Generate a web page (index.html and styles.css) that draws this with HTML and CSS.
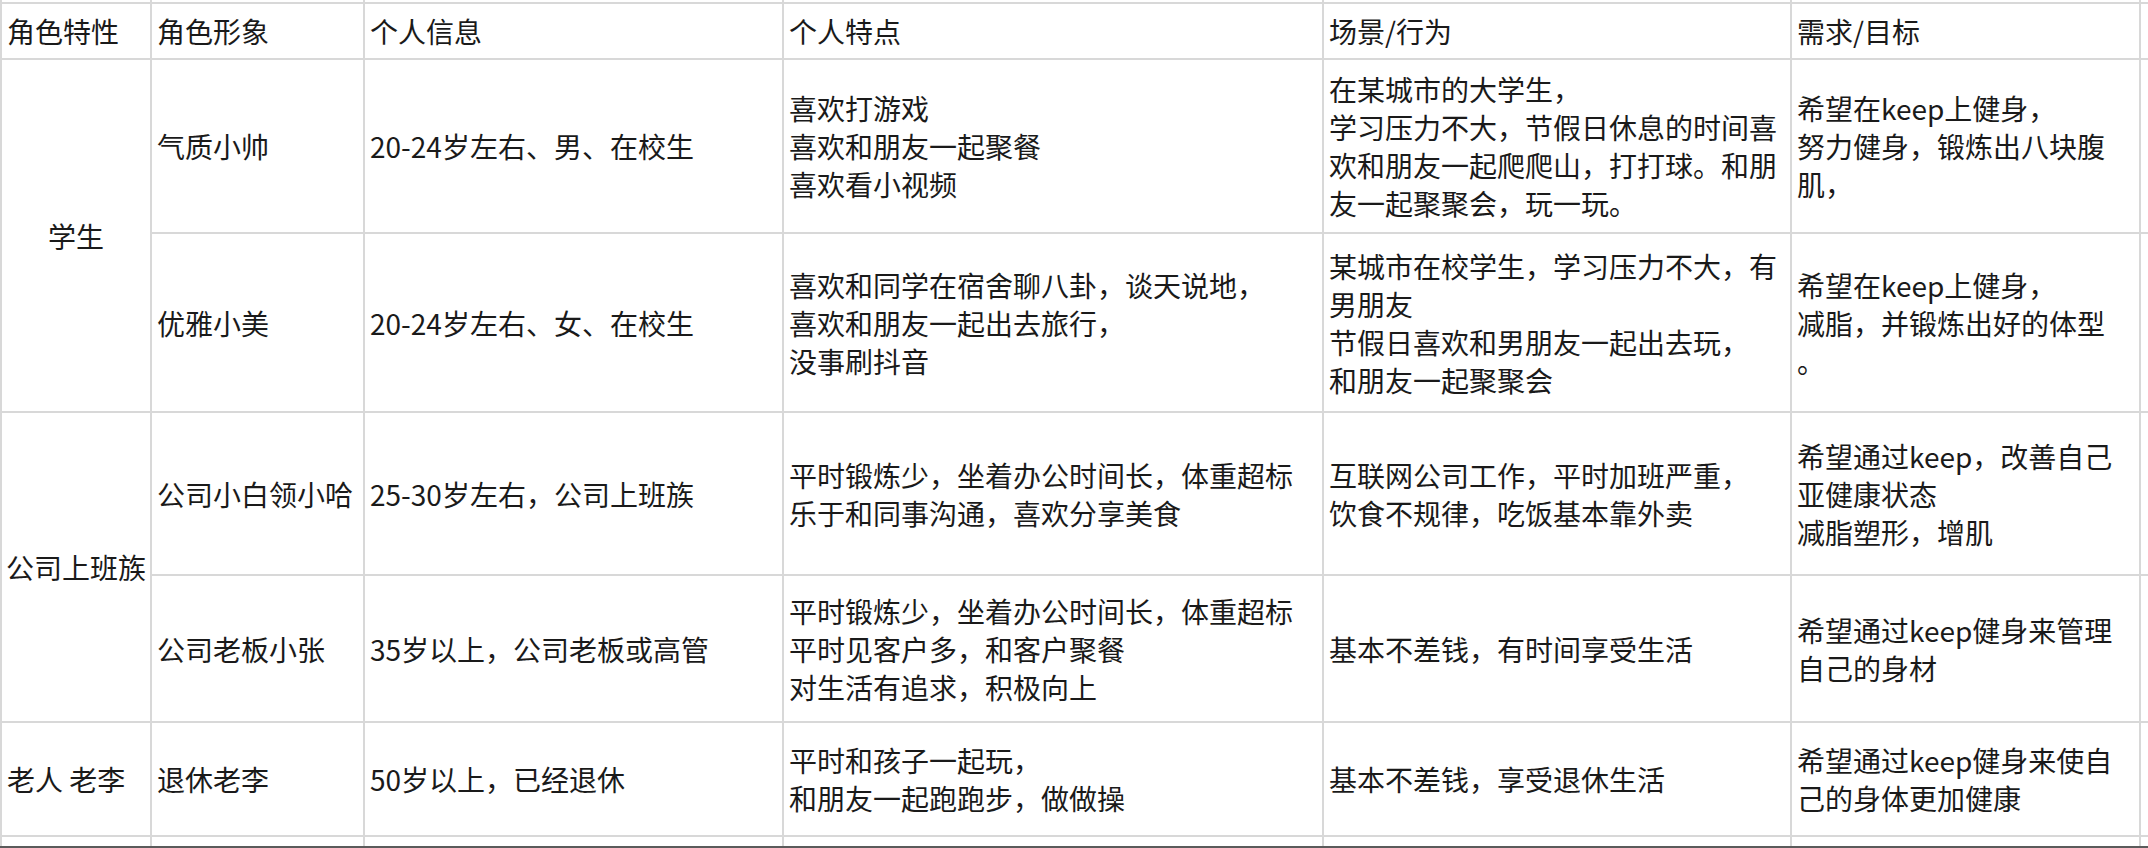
FILE: index.html
```html
<!DOCTYPE html>
<html lang="zh-CN">
<head>
<meta charset="utf-8">
<title>用户角色</title>
<link rel="stylesheet" href="styles.css">
</head>
<body>
<div class="sheet">
  <div class="grid">
    <div class="cell strip"></div><div class="cell strip"></div><div class="cell strip"></div><div class="cell strip"></div><div class="cell strip"></div><div class="cell strip"></div><div class="cell strip"></div>

    <div class="cell">角色特性</div>
    <div class="cell">角色形象</div>
    <div class="cell">个人信息</div>
    <div class="cell">个人特点</div>
    <div class="cell">场景/行为</div>
    <div class="cell">需求/目标</div>
    <div class="cell"></div>

    <div class="cell span2 center">学生</div>
    <div class="cell">气质小帅</div>
    <div class="cell">20-24岁左右、男、在校生</div>
    <div class="cell">喜欢打游戏<br>喜欢和朋友一起聚餐<br>喜欢看小视频</div>
    <div class="cell">在某城市的大学生，<br>学习压力不大，节假日休息的时间喜<br>欢和朋友一起爬爬山，打打球。和朋<br>友一起聚聚会，玩一玩。</div>
    <div class="cell">希望在keep上健身，<br>努力健身，锻炼出八块腹<br>肌，</div>
    <div class="cell"></div>

    <div class="cell">优雅小美</div>
    <div class="cell">20-24岁左右、女、在校生</div>
    <div class="cell">喜欢和同学在宿舍聊八卦，谈天说地，<br>喜欢和朋友一起出去旅行，<br>没事刷抖音</div>
    <div class="cell">某城市在校学生，学习压力不大，有<br>男朋友<br>节假日喜欢和男朋友一起出去玩，<br>和朋友一起聚聚会</div>
    <div class="cell">希望在keep上健身，<br>减脂，并锻炼出好的体型<br>。</div>
    <div class="cell"></div>

    <div class="cell span2 center">公司上班族</div>
    <div class="cell">公司小白领小哈</div>
    <div class="cell">25-30岁左右，公司上班族</div>
    <div class="cell">平时锻炼少，坐着办公时间长，体重超标<br>乐于和同事沟通，喜欢分享美食</div>
    <div class="cell">互联网公司工作，平时加班严重，<br>饮食不规律，吃饭基本靠外卖</div>
    <div class="cell">希望通过keep，改善自己<br>亚健康状态<br>减脂塑形，增肌</div>
    <div class="cell"></div>

    <div class="cell">公司老板小张</div>
    <div class="cell">35岁以上，公司老板或高管</div>
    <div class="cell">平时锻炼少，坐着办公时间长，体重超标<br>平时见客户多，和客户聚餐<br>对生活有追求，积极向上</div>
    <div class="cell">基本不差钱，有时间享受生活</div>
    <div class="cell">希望通过keep健身来管理<br>自己的身材</div>
    <div class="cell"></div>

    <div class="cell">老人 老李</div>
    <div class="cell">退休老李</div>
    <div class="cell">50岁以上，已经退休</div>
    <div class="cell">平时和孩子一起玩，<br>和朋友一起跑跑步，做做操</div>
    <div class="cell">基本不差钱，享受退休生活</div>
    <div class="cell">希望通过keep健身来使自<br>己的身体更加健康</div>
    <div class="cell"></div>

    <div class="cell"></div><div class="cell"></div><div class="cell"></div><div class="cell"></div><div class="cell"></div><div class="cell"></div><div class="cell"></div>
  </div>
</div>
</body>
</html>
```
FILE: styles.css
```css
html, body {
  margin: 0;
  padding: 0;
  background: #ffffff;
}

.sheet {
  width: 2148px;
  height: 848px;
  overflow: hidden;
  box-sizing: border-box;
  border-bottom: 2px solid #5b5b5b;
  background: #ffffff;
}

.grid {
  display: grid;
  grid-template-columns: 148px 211px 417px 538px 466px 347px 60px;
  grid-template-rows: 2px 54px 172px 177px 161px 145px 112px 40px;
  gap: 2px;
  padding-left: 2px;
  background: #d8d8d8;
  width: max-content;
  font-family: "Noto Sans CJK SC", sans-serif;
  font-size: 28px;
  font-weight: 400;
  line-height: 38px;
  color: #1a1a1a;
}

.cell {
  background: #ffffff;
  display: flex;
  align-items: center;
  padding: 0 4px 0 5px;
  white-space: nowrap;
  overflow: hidden;
}

.strip {
  padding: 0;
}

.span2 {
  grid-row: span 2;
}

.center {
  justify-content: center;
  padding: 0;
}
```
